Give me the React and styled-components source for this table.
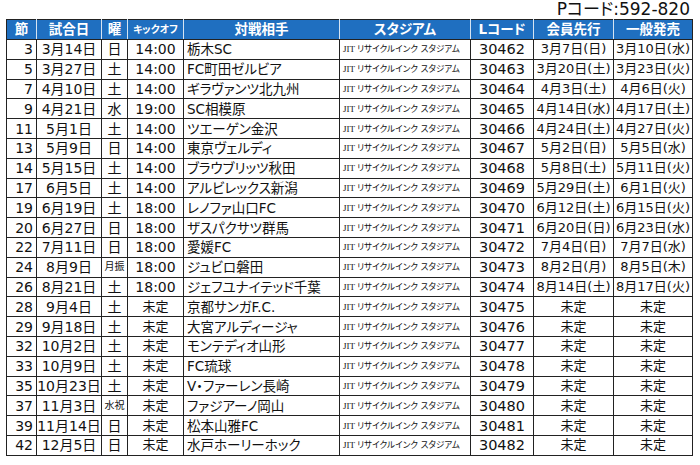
import React from "react";
import styled, { createGlobalStyle } from "styled-components";

const Global = createGlobalStyle`
  html, body { margin: 0; padding: 0; background: #fff; }
  body {
    font-family: "DejaVu Sans", "Noto Sans CJK JP", sans-serif;
    font-feature-settings: "palt";
    color: #111;
  }
`;

const Page = styled.div`
  width: 700px;
  height: 465px;
  padding: 0 0 0 6px;
  box-sizing: border-box;
  display: flex;
  flex-direction: column;
`;

const Title = styled.div`
  height: 19px;
  display: flex;
  justify-content: flex-end;
  align-items: center;
  padding-right: 10px;
  font-size: 17px;
  line-height: 19px;
  color: #111;
`;

const Table = styled.table`
  width: 686px;
  border-collapse: collapse;
  table-layout: fixed;
`;

const HeadCell = styled.th`
  background: #1f6fc0;
  color: #fff;
  font-weight: 700;
  font-size: ${(p) => (p.$small ? "10px" : "13.5px")};
  height: 19px;
  padding: 0;
  line-height: 19px;
  border: 1px solid #222;
  border-left-color: #d6e4f2;
  border-right-color: #d6e4f2;
  white-space: nowrap;
  overflow: hidden;
  &:first-child { border-left-color: #222; }
  &:last-child { border-right-color: #222; }
`;

const Cell = styled.td`
  border: 1px solid #222;
  height: 18.8px;
  padding: ${(p) => (p.$align === "right" ? "0 3px 0 0" : p.$align === "left" ? "0 0 0 3px" : "0")};
  text-align: ${(p) => p.$align || "center"};
  font-size: ${(p) => p.$size || "14px"};
  line-height: 18px;
  white-space: nowrap;
  overflow: hidden;
  color: #111;
`;

const Stadium = styled(Cell)`
  font-size: 8.6px;
  padding-left: 3px;
  text-align: left;
`;

const Jit = styled.span`
  font-family: "Liberation Serif", serif;
  font-size: 9px;
  margin-right: 2px;
`;

const cols = [30, 65, 26, 56, 156, 131, 63, 80, 79];

const rows = [
  ["3", "3月14日", "日", "14:00", "栃木SC", "30462", "3月7日(日)", "3月10日(水)"],
  ["5", "3月27日", "土", "14:00", "FC町田ゼルビア", "30463", "3月20日(土)", "3月23日(火)"],
  ["7", "4月10日", "土", "14:00", "ギラヴァンツ北九州", "30464", "4月3日(土)", "4月6日(火)"],
  ["9", "4月21日", "水", "19:00", "SC相模原", "30465", "4月14日(水)", "4月17日(土)"],
  ["11", "5月1日", "土", "14:00", "ツエーゲン金沢", "30466", "4月24日(土)", "4月27日(火)"],
  ["13", "5月9日", "日", "14:00", "東京ヴェルディ", "30467", "5月2日(日)", "5月5日(水)"],
  ["14", "5月15日", "土", "14:00", "ブラウブリッツ秋田", "30468", "5月8日(土)", "5月11日(火)"],
  ["17", "6月5日", "土", "14:00", "アルビレックス新潟", "30469", "5月29日(土)", "6月1日(火)"],
  ["19", "6月19日", "土", "18:00", "レノファ山口FC", "30470", "6月12日(土)", "6月15日(火)"],
  ["20", "6月27日", "日", "18:00", "ザスパクサツ群馬", "30471", "6月20日(日)", "6月23日(水)"],
  ["22", "7月11日", "日", "18:00", "愛媛FC", "30472", "7月4日(日)", "7月7日(水)"],
  ["24", "8月9日", "月振", "18:00", "ジュビロ磐田", "30473", "8月2日(月)", "8月5日(木)"],
  ["26", "8月21日", "土", "18:00", "ジェフユナイテッド千葉", "30474", "8月14日(土)", "8月17日(火)"],
  ["28", "9月4日", "土", "未定", "京都サンガF.C.", "30475", "未定", "未定"],
  ["29", "9月18日", "土", "未定", "大宮アルディージャ", "30476", "未定", "未定"],
  ["32", "10月2日", "土", "未定", "モンテディオ山形", "30477", "未定", "未定"],
  ["33", "10月9日", "土", "未定", "FC琉球", "30478", "未定", "未定"],
  ["35", "10月23日", "土", "未定", "V・ファーレン長崎", "30479", "未定", "未定"],
  ["37", "11月3日", "水祝", "未定", "ファジアーノ岡山", "30480", "未定", "未定"],
  ["39", "11月14日", "日", "未定", "松本山雅FC", "30481", "未定", "未定"],
  ["42", "12月5日", "日", "未定", "水戸ホーリーホック", "30482", "未定", "未定"],
];

export default function App() {
  return (
    <>
      <Global />
      <Page>
        <Title>Pコード:592-820</Title>
        <Table>
          <colgroup>
            {cols.map((w, i) => (
              <col key={i} style={{ width: w }} />
            ))}
          </colgroup>
          <thead>
            <tr>
              <HeadCell>節</HeadCell>
              <HeadCell>試合日</HeadCell>
              <HeadCell>曜</HeadCell>
              <HeadCell $small>キックオフ</HeadCell>
              <HeadCell>対戦相手</HeadCell>
              <HeadCell>スタジアム</HeadCell>
              <HeadCell>Lコード</HeadCell>
              <HeadCell>会員先行</HeadCell>
              <HeadCell>一般発売</HeadCell>
            </tr>
          </thead>
          <tbody>
            {rows.map((r) => (
              <tr key={r[0]}>
                <Cell $align="right">{r[0]}</Cell>
                <Cell>{r[1]}</Cell>
                <Cell $size={r[2].length > 1 ? "10px" : "14px"}>{r[2]}</Cell>
                <Cell $size={r[3] === "未定" ? "13px" : "14px"}>{r[3]}</Cell>
                <Cell $align="left" $size="13.5px">{r[4]}</Cell>
                <Stadium>
                  <Jit>JIT</Jit>リサイクルインク スタジアム
                </Stadium>
                <Cell $size="14.5px">{r[5]}</Cell>
                <Cell $size="13px">{r[6]}</Cell>
                <Cell $size="13px">{r[7]}</Cell>
              </tr>
            ))}
          </tbody>
        </Table>
      </Page>
    </>
  );
}
